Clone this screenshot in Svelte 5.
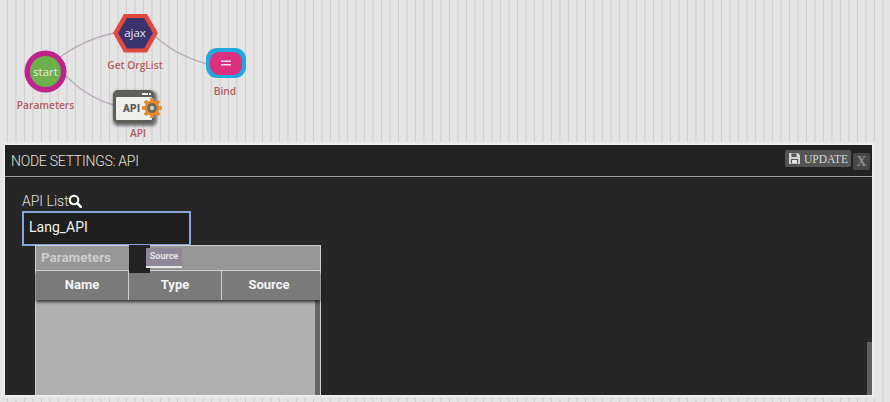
<script>
  const columns = ['Name', 'Type', 'Source'];
</script>

<div class="page">
  <div class="canvas">
    <svg class="diagram" width="890" height="145" viewBox="0 0 890 145">
      <defs>
        <filter id="soft" x="-30%" y="-30%" width="160%" height="160%">
          <feGaussianBlur stdDeviation="1.4" />
        </filter>
      </defs>
      <g class="links">
        <path d="M60 57 C78 44 95 37 114 33" />
        <path d="M156 37 C170 50 186 58 207 64" />
        <path d="M66 76 C80 90 95 100 114 105" />
      </g>

      <circle cx="45.5" cy="71.5" r="21" fill="#c0228c" />
      <circle cx="45.5" cy="71.5" r="15.5" fill="#6cb04c" />
      <text class="inner" x="45.5" y="75.5" text-anchor="middle">start</text>
      <text class="label" x="45.5" y="109" text-anchor="middle">Parameters</text>

      <polygon points="113,33 124,14 147,14 158,33 147,52.5 124,52.5" fill="#e04a3e" />
      <polygon points="118,33 127,18 144,18 153,33 144,48.5 127,48.5" fill="#3b3270" />
      <text class="inner" x="135" y="37" text-anchor="middle">ajax</text>
      <text class="label" x="135" y="69" text-anchor="middle">Get OrgList</text>

      <rect x="206" y="48" width="40" height="30" rx="11" fill="#1ea8dc" />
      <rect x="210" y="52" width="32" height="23" rx="9" fill="#dc2f7e" />
      <rect x="221" y="60.5" width="10" height="1.5" fill="#f2e4ea" />
      <rect x="221" y="64" width="10" height="1.5" fill="#f2e4ea" />
      <text class="label" x="225" y="95" text-anchor="middle">Bind</text>

      <rect x="113" y="91" width="44" height="35" rx="5" fill="#000" opacity="0.5" filter="url(#soft)" />
      <rect x="113" y="90" width="41" height="33" rx="5" fill="#5f5e58" />
      <rect x="116" y="97" width="36" height="23" rx="1" fill="#efefeb" />
      <rect x="142" y="93" width="6" height="2" fill="#e8e8e4" />
      <rect x="149" y="93" width="2" height="2" fill="#e8e8e4" />
      <text class="api" x="123" y="112">API</text>
      <g transform="translate(152 108)">
        <g fill="#e38a2a">
          <circle r="7.5" />
          <rect x="-1.8" y="-10" width="3.6" height="20" />
          <rect x="-1.8" y="-10" width="3.6" height="20" transform="rotate(45)" />
          <rect x="-1.8" y="-10" width="3.6" height="20" transform="rotate(90)" />
          <rect x="-1.8" y="-10" width="3.6" height="20" transform="rotate(135)" />
        </g>
        <circle r="4.8" fill="#66655f" />
        <circle r="2.2" fill="#cfcfca" />
      </g>
      <text class="label" x="138" y="137" text-anchor="middle">API</text>
    </svg>
  </div>

  <section class="panel">
    <header class="panel-head">
      <h2>NODE SETTINGS: API</h2>
      <div class="actions">
        <button class="update">
          <svg width="13" height="13" viewBox="0 0 13 13">
            <path d="M1 1h9l2 2v9H1z" fill="#d0d0d0" />
            <rect x="3.5" y="1.5" width="5" height="3.5" fill="#555" />
            <rect x="3" y="7" width="7" height="4.5" fill="#555" />
            <rect x="4" y="8" width="5" height="3.5" fill="#e8e8e8" />
          </svg>
          UPDATE
        </button>
        <button class="close">X</button>
      </div>
    </header>

    <div class="panel-body">
      <div class="field-label">
        <span>API List</span>
        <svg width="14" height="14" viewBox="0 0 14 14">
          <circle cx="6" cy="6" r="4.3" fill="none" stroke="#fff" stroke-width="2.1" />
          <path d="M9.2 9.2 L12.8 12.8" stroke="#fff" stroke-width="2.6" stroke-linecap="round" />
        </svg>
      </div>
      <div class="input">Lang_API</div>

      <div class="table">
        <div class="table-title">
          <span>Parameters</span>
          <div class="ghost"></div>
          <div class="chip">Source</div>
        </div>
        <div class="table-cols">
          {#each columns as c}
            <div class="col">{c}</div>
          {/each}
        </div>
        <div class="table-rows">
          <div class="rows-fill"></div>
        </div>
      </div>
    </div>
    <div class="scroll-thumb"></div>
  </section>
</div>

<style>
  :global(body) {
    margin: 0;
    background-color: #e3e3e3;
    overflow: hidden;
  }
  .page {
    width: 890px;
    height: 402px;
    overflow: hidden;
    background-color: #e4e4e4;
    background-image: repeating-linear-gradient(90deg, #e4e4e4 0, #e4e4e4 6.4px, #cfcfcf 7.4px, #e4e4e4 8.5px);
  }
  .canvas {
    height: 145px;
  }
  .diagram {
    display: block;
  }
  .links path {
    fill: none;
    stroke: #bcaabd;
    stroke-width: 1.4;
  }
  .inner {
    font: 11.5px "Open Sans", sans-serif;
    fill: #e8e8e8;
  }
  .label {
    font: 600 10.2px "Open Sans", sans-serif;
    fill: #b2605f;
  }
  .api {
    font: 900 10px Roboto, sans-serif;
    fill: #5a5a56;
    letter-spacing: 0.3px;
  }
  .panel {
    position: relative;
    margin-left: 5px;
    width: 867px;
    height: 250px;
    box-sizing: border-box;
    background: #262626;
    box-shadow: 0 0 0 1px #efefef, 0 0 0 3px #e8e8e8;
    font-family: Roboto, sans-serif;
    color: #dcdcdc;
    overflow: hidden;
  }
  .panel-head {
    height: 32px;
    box-sizing: border-box;
    border-bottom: 1px solid #a0a0a0;
    display: flex;
    justify-content: space-between;
    padding: 5px 2px 0 6px;
    background: #222;
  }
  h2 {
    margin: 2px 0 0;
    font-size: 14px;
    font-weight: 300;
    letter-spacing: -0.25px;
    line-height: 18px;
    color: #e2e2d8;
  }
  .actions {
    display: flex;
    align-items: flex-start;
    gap: 2px;
  }
  button {
    border: 0;
    padding: 0;
    font-family: "Liberation Serif", serif;
  }
  .update {
    width: 66px;
    height: 17px;
    background: #555;
    color: #d8d8d8;
    border-radius: 2px;
    font-size: 11.5px;
    display: flex;
    align-items: center;
    justify-content: center;
    gap: 3px;
  }
  .close {
    margin-top: 3px;
    width: 17px;
    height: 17px;
    background: #474747;
    color: #8c8c8c;
    font-size: 14px;
    font-weight: 700;
    border-radius: 2px;
  }
  .panel-body {
    padding: 14px 0 0 17px;
  }
  .field-label {
    display: flex;
    align-items: center;
    height: 20px;
    font-size: 14px;
    font-weight: 300;
    color: #e0e0e0;
  }
  .field-label svg {
    margin-left: -1px;
  }
  .input {
    width: 169px;
    height: 35px;
    box-sizing: border-box;
    border: 2px solid #86a6dc;
    padding-left: 5px;
    line-height: 29px;
    font-size: 14px;
    color: #f0f0f0;
    background: #1f1f1f;
  }
  .table {
    position: relative;
    margin-left: 13px;
    margin-top: -1px;
    width: 286px;
    height: 150px;
    box-sizing: border-box;
    border: 1px solid #cfcfcf;
    border-bottom: 0;
  }
  .table-title {
    position: relative;
    height: 25px;
    box-sizing: border-box;
    background: #979797;
    border-bottom: 1.5px solid #d8d8d8;
    display: flex;
    align-items: center;
    padding-left: 5px;
    padding-bottom: 2px;
  }
  .table-title span {
    font-size: 13.4px;
    font-weight: 700;
    color: #cdcdcd;
  }
  .ghost {
    position: absolute;
    left: 93px;
    top: -1px;
    width: 21px;
    height: 28px;
    background: #222;
    z-index: 2;
  }
  .chip {
    position: absolute;
    left: 110px;
    top: 2px;
    width: 36px;
    height: 20px;
    box-sizing: border-box;
    background: #8f8798;
    border-bottom: 2px solid #e8e8e8;
    font-size: 9px;
    font-weight: 700;
    line-height: 17px;
    text-align: center;
    color: #e4e4e4;
    z-index: 3;
  }
  .table-cols {
    display: grid;
    grid-template-columns: 93px 93px 1fr;
    height: 29px;
    background: #7a7a7a;
    box-shadow: 0 2px 3px rgba(0, 0, 0, 0.7);
    position: relative;
  }
  .col {
    display: flex;
    align-items: center;
    justify-content: center;
    font-size: 13px;
    font-weight: 700;
    color: #f4f4f4;
    border-right: 1.5px solid #cfcfcf;
    box-sizing: border-box;
    padding-bottom: 2px;
  }
  .col:last-child {
    border-right: 0;
    padding-right: 4px;
  }
  .table-rows {
    height: 100px;
    background: #666;
    padding-right: 5px;
  }
  .rows-fill {
    height: 100%;
    background: #b0b0b0;
  }
  .scroll-thumb {
    position: absolute;
    right: 0;
    top: 197px;
    width: 5px;
    height: 53px;
    background: #5f5f5f;
  }
</style>
